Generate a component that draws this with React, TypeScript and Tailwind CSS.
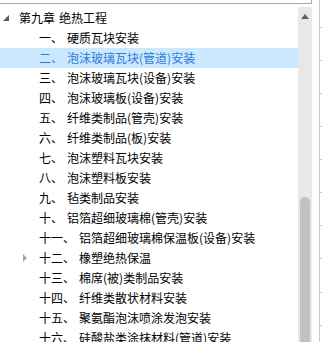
import React from "react";

const items: { label: string; text: string; selected?: boolean; collapsed?: boolean }[] = [
  { label: "一、", text: "硬质瓦块安装" },
  { label: "二、", text: "泡沫玻璃瓦块(管道)安装", selected: true },
  { label: "三、", text: "泡沫玻璃瓦块(设备)安装" },
  { label: "四、", text: "泡沫玻璃板(设备)安装" },
  { label: "五、", text: "纤维类制品(管壳)安装" },
  { label: "六、", text: "纤维类制品(板)安装" },
  { label: "七、", text: "泡沫塑料瓦块安装" },
  { label: "八、", text: "泡沫塑料板安装" },
  { label: "九、", text: "毡类制品安装" },
  { label: "十、", text: "铝箔超细玻璃棉(管壳)安装" },
  { label: "十一、", text: "铝箔超细玻璃棉保温板(设备)安装" },
  { label: "十二、", text: "橡塑绝热保温", collapsed: true },
  { label: "十三、", text: "棉席(被)类制品安装" },
  { label: "十四、", text: "纤维类散状材料安装" },
  { label: "十五、", text: "聚氨酯泡沫喷涂发泡安装" },
  { label: "十六、", text: "硅酸盐类涂抹材料(管道)安装" },
];

const ticks = [27, 60, 93, 126, 159, 192, 225, 258, 292, 325];

export default function App() {
  return (
    <div
      className="w-[322px] h-[342px] overflow-hidden bg-white flex text-[12px] leading-[20px] text-black"
      style={{ fontFamily: '"Noto Sans CJK SC", "Noto Sans", sans-serif' }}
    >
      <div className="w-[319px] flex flex-col">
        <div className="h-[4px] w-[312px] border-b border-r border-[#a8a8a8] shrink-0" />
        <div className="flex flex-1 min-h-0">
          <div className="w-[298px] pt-[4px] flex flex-col">
            <div className="h-[20px] flex items-center whitespace-nowrap">
              <div className="w-[19px] h-[20px] flex items-center pl-[3px]">
                <svg width="6" height="6" viewBox="0 0 6 6">
                  <path d="M6 0 L6 6 L0 6 Z" fill="#5a5a5a" />
                </svg>
              </div>
              <span>第九章</span>
              <span className="ml-[4px]">绝热工程</span>
            </div>
            {items.map((it) => (
              <div
                key={it.label}
                className={`h-[20px] flex items-center whitespace-nowrap ${
                  it.selected ? "bg-[#cce8ff] text-[#2b7bd6]" : ""
                }`}
              >
                <div className="w-[39px] h-[20px] flex items-center pl-[23px] shrink-0">
                  {it.collapsed && (
                    <svg width="4" height="8" viewBox="0 0 4 8">
                      <path d="M0 0 L4 4 L0 8 Z" fill="#a6a6a6" />
                    </svg>
                  )}
                </div>
                <span>{it.label}</span>
                <span className="ml-[4px]">{it.text}</span>
              </div>
            ))}
          </div>
          <div className="w-[14px] mt-[3px] bg-[#e8e8e8] flex flex-col items-center shrink-0">
            <div className="h-[12px] flex items-end justify-center">
              <svg width="8" height="5" viewBox="0 0 8 5">
                <path d="M0 5 L4 0 L8 5 Z" fill="#606060" />
              </svg>
            </div>
            <div className="mt-[178px] w-[10px] flex-1 bg-[#c1c1c1] rounded-t-[5px]" />
          </div>
        </div>
      </div>
      <div className="w-[3px] relative border-l border-[#c8c8c8]">
        {ticks.map((t) => (
          <div key={t} className="absolute left-0 w-[2px] h-px bg-[#c8c8c8]" style={{ top: t }} />
        ))}
      </div>
    </div>
  );
}
